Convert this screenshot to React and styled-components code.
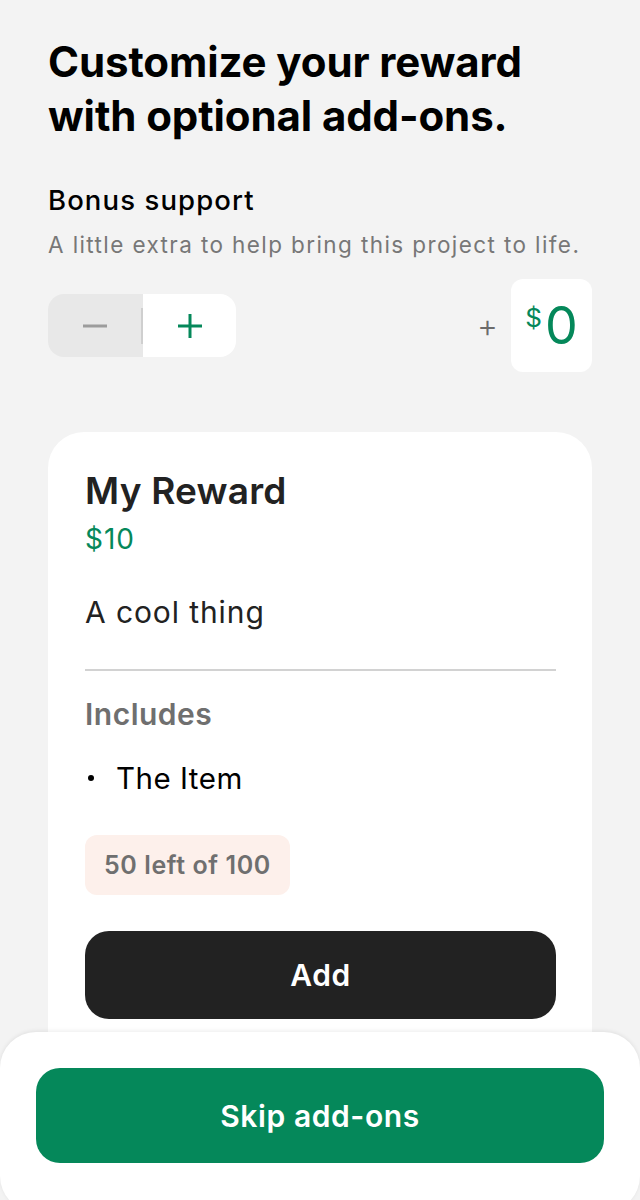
import styled, { createGlobalStyle } from 'styled-components';

const GlobalStyle = createGlobalStyle`
  html, body {
    margin: 0;
    padding: 0;
    background: #f3f3f3;
  }
  body {
    font-family: Inter, 'Noto Sans', 'Liberation Sans', sans-serif;
    -webkit-font-smoothing: antialiased;
  }
`;

const Screen = styled.div`
  position: relative;
  width: 640px;
  height: 1200px;
  overflow: hidden;
  background: #f3f3f3;
`;

const Content = styled.div`
  padding: 35px 48px 0;
  display: flex;
  flex-direction: column;
`;

const Title = styled.h1`
  margin: 0;
  font-size: 42px;
  line-height: 54px;
  font-weight: 700;
  letter-spacing: -0.1px;
  color: #000;
`;

const Section = styled.div`
  margin-top: 40px;
  display: flex;
  flex-direction: column;
`;

const SectionTitle = styled.div`
  font-size: 27.5px;
  line-height: 34px;
  font-weight: 550;
  color: #000;
  letter-spacing: 1.1px;
`;

const SectionText = styled.div`
  margin-top: 14px;
  font-size: 22.5px;
  line-height: 28px;
  color: #777;
  letter-spacing: 1.4px;
`;

const StepperRow = styled.div`
  margin-top: 20px;
  display: flex;
  align-items: center;
  justify-content: space-between;
`;

const Stepper = styled.div`
  display: flex;
  width: 188px;
  height: 63px;
  border-radius: 16px;
  overflow: hidden;
`;

const StepButton = styled.button`
  flex: 1;
  display: flex;
  align-items: center;
  justify-content: center;
  border: none;
  padding: 0;
  background: ${(p) => (p.$disabled ? '#e8e8e8' : '#fff')};
  color: ${(p) => (p.$disabled ? '#9c9c9c' : '#05885a')};
`;

const StepDivider = styled.div`
  width: 2px;
  align-self: stretch;
  background: #e8e8e8;
  display: flex;
  align-items: center;

  &::after {
    content: '';
    display: block;
    width: 2px;
    height: 36px;
    background: #cfcfcf;
  }
`;

const Amount = styled.div`
  display: flex;
  align-items: center;
  gap: 13px;
`;

const PlusSign = styled.span`
  font-size: 32px;
  line-height: 1;
  color: #6b6b6b;
  font-weight: 300;
`;

const AmountBox = styled.div`
  width: 81px;
  height: 93px;
  border-radius: 12px;
  background: #fff;
  display: flex;
  align-items: center;
  justify-content: center;
  color: #05885a;
`;

const Currency = styled.span`
  font-size: 26px;
  align-self: flex-start;
  margin-top: 23px;
  margin-right: 3px;
`;

const Value = styled.span`
  font-size: 52px;
  font-weight: 400;
`;

const Card = styled.div`
  margin-top: 60px;
  background: #fff;
  border-radius: 36px;
  padding: 37px 36px 120px 37px;
  display: flex;
  flex-direction: column;
`;

const CardTitle = styled.div`
  font-size: 37px;
  line-height: 44px;
  font-weight: 600;
  color: #222;
  letter-spacing: 0.2px;
`;

const Price = styled.div`
  margin-top: 9px;
  font-size: 28px;
  line-height: 34px;
  color: #05885a;
  letter-spacing: 1px;
`;

const Description = styled.div`
  margin-top: 37px;
  font-size: 30px;
  line-height: 38px;
  color: #222;
  letter-spacing: 0.9px;
`;

const Divider = styled.hr`
  margin: 38px 0 0;
  border: none;
  height: 2px;
  background: #d2d2d2;
`;

const Label = styled.div`
  margin-top: 25px;
  font-size: 30px;
  line-height: 36px;
  font-weight: 600;
  color: #6f6f6f;
  letter-spacing: 0.5px;
`;

const List = styled.ul`
  margin: 28px 0 0;
  padding: 0;
  list-style: none;
`;

const ListItem = styled.li`
  display: flex;
  align-items: center;
  gap: 22px;
  font-size: 29.5px;
  line-height: 36px;
  color: #000;
  letter-spacing: 0.5px;

  &::before {
    content: '';
    width: 6px;
    height: 6px;
    border-radius: 50%;
    background: #000;
    margin-left: 3px;
  }
`;

const Badge = styled.div`
  align-self: flex-start;
  margin-top: 39px;
  padding: 0 19px;
  height: 60px;
  display: flex;
  align-items: center;
  border-radius: 12px;
  background: #fdf0eb;
  color: #6f6f6f;
  font-size: 25px;
  font-weight: 600;
  letter-spacing: 0.6px;
`;

const Button = styled.button`
  width: 100%;
  border: none;
  border-radius: ${(p) => p.$radius || 24}px;
  height: ${(p) => p.$height || 88}px;
  background: ${(p) => p.$bg};
  color: #fff;
  font-family: inherit;
  font-size: 30px;
  font-weight: 600;
  letter-spacing: 0.6px;
  margin-top: ${(p) => p.$top || 0}px;
`;

const BottomSheet = styled.div`
  position: absolute;
  left: 0;
  right: 0;
  top: 1032px;
  height: 180px;
  background: #fff;
  border-radius: 36px;
  box-shadow: 0 -1px 4px rgba(0, 0, 0, 0.08);
  padding: 36px 36px 0;
  box-sizing: border-box;
`;

const MinusIcon = () => (
  <svg width="26" height="26" viewBox="0 0 26 26">
    <path d="M1 13h24" stroke="currentColor" strokeWidth="3" />
  </svg>
);

const PlusIcon = () => (
  <svg width="26" height="26" viewBox="0 0 26 26">
    <path d="M1 13h24M13 1v24" stroke="currentColor" strokeWidth="3" />
  </svg>
);

export default function App() {
  return (
    <>
      <GlobalStyle />
      <Screen>
        <Content>
          <Title>
            Customize your reward
            <br />
            with optional add-ons.
          </Title>
          <Section>
            <SectionTitle>Bonus support</SectionTitle>
            <SectionText>A little extra to help bring this project to life.</SectionText>
            <StepperRow>
              <Stepper>
                <StepButton type="button" $disabled>
                  <MinusIcon />
                </StepButton>
                <StepDivider />
                <StepButton type="button">
                  <PlusIcon />
                </StepButton>
              </Stepper>
              <Amount>
                <PlusSign>+</PlusSign>
                <AmountBox>
                  <Currency>$</Currency>
                  <Value>0</Value>
                </AmountBox>
              </Amount>
            </StepperRow>
          </Section>
          <Card>
            <CardTitle>My Reward</CardTitle>
            <Price>$10</Price>
            <Description>A cool thing</Description>
            <Divider />
            <Label>Includes</Label>
            <List>
              <ListItem>The Item</ListItem>
            </List>
            <Badge>50 left of 100</Badge>
            <Button type="button" $bg="#222" $top={36}>
              Add
            </Button>
          </Card>
        </Content>
        <BottomSheet>
          <Button type="button" $bg="#05885a" $height={95} $radius={24}>
            Skip add-ons
          </Button>
        </BottomSheet>
      </Screen>
    </>
  );
}
